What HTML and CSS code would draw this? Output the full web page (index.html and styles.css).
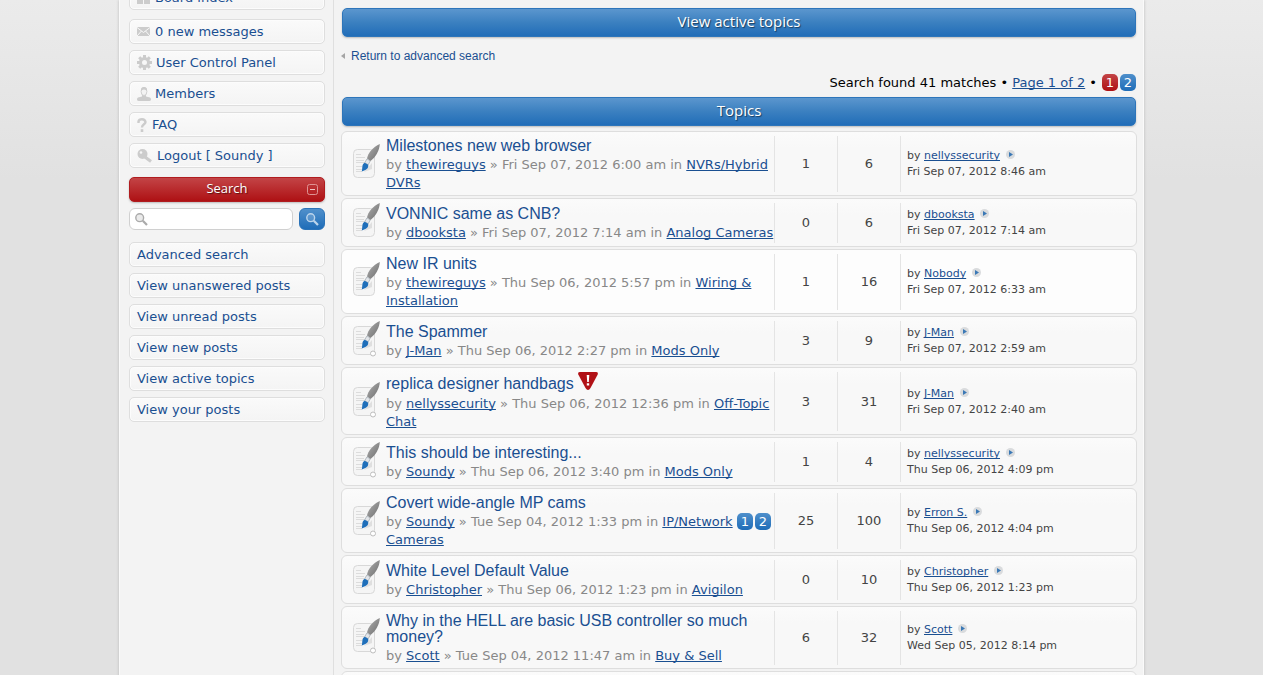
FILE: index.html
```
<!DOCTYPE html>
<html lang="en">
<head>
<meta charset="utf-8">
<title>Search results</title>
<link rel="stylesheet" href="styles.css">
</head>
<body>
<svg class="defs" aria-hidden="true">
  <defs>
    <linearGradient id="handle" x1="0" y1="0" x2="1" y2="1"><stop offset="0" stop-color="#b0b0b0"/><stop offset="1" stop-color="#6c6c6c"/></linearGradient>
    <symbol id="topic" viewBox="0 0 28 34">
      <rect x="1.500" y="5.500" width="21" height="28" rx="4" fill="#f5f5f5" stroke="#d8d8d8"/>
      <path d="M4 10.500h5M4 13.500h9M4 16.500h8M4 18.500h8M4 22.500h6M4 25.500h6M4 27.500h6" stroke="#dcdcdc" fill="none"/>
      <path d="M12 28l8-9v6z" fill="#d0d0d0" opacity=".6"/>
      <path d="M27.800 0C21 3 16 9 15 14.500L18.500 17C24 13 27.500 6 27.800 0z" fill="url(#handle)"/>
      <path d="M15 14.800L18.200 17 16.200 20.800 12.700 18.700z" fill="#e3e6ea" stroke="#9ba3ab" stroke-width=".7"/>
      <path d="M12.700 18.700C9.500 20.500 10.800 23.500 9.800 27.500 13 26.500 17 25 16.200 20.800z" fill="#1f6fba"/>
    </symbol>
    <symbol id="topic-mine" viewBox="0 0 28 36">
      <use href="#topic" width="28" height="34"/>
      <circle cx="21" cy="32.500" r="2.500" fill="#fff" stroke="#bdbdbd"/>
    </symbol>
    <symbol id="go" viewBox="0 0 9 9">
      <circle cx="4.500" cy="4.500" r="4.500" fill="#d9dbdd"/>
      <path d="M3 2l4 2.500L3 7z" fill="#3a78b5"/>
    </symbol>
    <symbol id="lens" viewBox="0 0 13 13">
      <circle cx="4.700" cy="4.700" r="3.900" fill="currentColor" fill-opacity=".25" stroke="currentColor" stroke-width="1.400"/>
      <path d="M7.800 7.800L12 12" stroke="currentColor" stroke-width="2.200" fill="none"/>
    </symbol>
  </defs>
</svg>

<div class="page">
  <aside class="sidebar">
    <ul class="menu menu-first">
      <li><a href="#"><svg width="13" height="13" viewBox="0 0 13 13"><path d="M0 0h6v6H0zM7 0h6v6H7zM0 7h6v6H0zM7 7h6v6H7z"/></svg>Board index</a></li>
    </ul>
    <ul class="menu">
      <li><a href="#"><svg width="13" height="9" viewBox="0 0 13 9"><path d="M0 0h13v9H0z"/><path d="M0 .5l6.500 5 6.500-5M0 9l4.500-5M13 9L8.500 4" fill="none" stroke="#f8f8f8"/></svg>0 new messages</a></li>
      <li><a href="#"><svg class="gear" width="15" height="15" viewBox="0 0 15 15"><circle cx="7.500" cy="7.500" r="4" fill="none" stroke="#ccc" stroke-width="3"/><path d="M6 0h3v3H6zM6 12h3v3H6zM0 6h3v3H0zM12 6h3v3h-3z"/><path d="M6 0h3v3H6zM6 12h3v3H6zM0 6h3v3H0zM12 6h3v3h-3z" transform="rotate(45 7.500 7.500)"/></svg>User Control Panel</a></li>
      <li><a href="#"><svg class="person" width="14" height="14" viewBox="0 0 14 14"><path d="M5 8h4v1.500l4 1Q14 11 14 12.500 14 14 11 14H3Q0 14 0 12.500 0 11 1 10.500l4-1z"/><ellipse cx="7" cy="4.500" rx="2.900" ry="4" fill="#f3f3f3" stroke="#d0d0d0"/><path d="M4 4Q3.500 0 7 0t3 4Q9 2.500 7 2.500T4 4z"/></svg>Members</a></li>
      <li><a href="#"><svg width="10" height="14" viewBox="0 0 10 14"><path d="M1.500 5V3.500Q2 1.200 5 1.200T8.500 4C8.500 6.500 5 6 5 9.500" fill="none" stroke="#ccc" stroke-width="2.400"/><path d="M3.700 11.200h2.600V14H3.700z"/></svg>FAQ</a></li>
      <li><a href="#"><svg class="key" width="16" height="14" viewBox="0 0 16 14"><circle cx="5.500" cy="5" r="5"/><path d="M8 8l6 4.500" fill="none" stroke="#ccc" stroke-width="3.200"/><circle cx="4" cy="3.500" r="1.300" fill="#f5f5f5"/></svg>Logout [ Soundy ]</a></li>
    </ul>
    <h2 class="side-title">Search
      <button class="collapse" type="button" aria-label="Collapse"><svg width="11" height="11" viewBox="0 0 11 11"><rect x=".5" y=".5" width="10" height="10" rx="2" fill="none" stroke="#df9393"/><path d="M3 5.500h5" stroke="#f0c4c4"/></svg></button>
    </h2>
    <form class="search">
      <label class="field"><svg width="13" height="13"><use href="#lens"/></svg><input type="text" aria-label="Search keywords"></label>
      <button class="submit" type="button" aria-label="Search"><svg width="13" height="13"><use href="#lens"/></svg></button>
    </form>
    <ul class="menu">
      <li><a href="#">Advanced search</a></li>
      <li><a href="#">View unanswered posts</a></li>
      <li><a href="#">View unread posts</a></li>
      <li><a href="#">View new posts</a></li>
      <li><a href="#">View active topics</a></li>
      <li><a href="#">View your posts</a></li>
    </ul>
  </aside>

  <main class="content">
    <h2 class="bar">View active topics</h2>
    <p class="return"><a href="#"><svg width="4" height="6" viewBox="0 0 4 6"><path d="M4 0v6L0 3z" fill="#a5a5a5"/></svg>Return to advanced search</a></p>
    <p class="results"><span>Search found 41 matches • <a href="#">Page 1 of 2</a> •</span><span class="pages"><strong>1</strong><a href="#">2</a></span></p>
    <h2 class="bar">Topics</h2>

    <table class="topics">
      <tbody>
      <tr>
        <td class="topic"><svg class="icon" width="28" height="34"><use href="#topic"/></svg><div><a class="title" href="#">Milestones new web browser</a><p>by <a href="#">thewireguys</a> » Fri Sep 07, 2012 6:00 am in <a href="#">NVRs/Hybrid DVRs</a></p></div></td>
        <td class="num">1</td><td class="num">6</td>
        <td class="last">by <a href="#">nellyssecurity</a> <svg class="go"><use href="#go"/></svg><br>Fri Sep 07, 2012 8:46 am</td>
      </tr>
      <tr>
        <td class="topic"><svg class="icon" width="28" height="34"><use href="#topic"/></svg><div><a class="title" href="#">VONNIC same as CNB?</a><p>by <a href="#">dbooksta</a> » Fri Sep 07, 2012 7:14 am in <a href="#">Analog Cameras</a></p></div></td>
        <td class="num">0</td><td class="num">6</td>
        <td class="last">by <a href="#">dbooksta</a> <svg class="go"><use href="#go"/></svg><br>Fri Sep 07, 2012 7:14 am</td>
      </tr>
      <tr class="lit">
        <td class="topic"><svg class="icon" width="28" height="34"><use href="#topic"/></svg><div><a class="title" href="#">New IR units</a><p>by <a href="#">thewireguys</a> » Thu Sep 06, 2012 5:57 pm in <a href="#">Wiring &amp; Installation</a></p></div></td>
        <td class="num">1</td><td class="num">16</td>
        <td class="last">by <a href="#">Nobody</a> <svg class="go"><use href="#go"/></svg><br>Fri Sep 07, 2012 6:33 am</td>
      </tr>
      <tr>
        <td class="topic"><svg class="icon" width="28" height="34"><use href="#topic-mine" width="28" height="36"/></svg><div><a class="title" href="#">The Spammer</a><p>by <a href="#">J-Man</a> » Thu Sep 06, 2012 2:27 pm in <a href="#">Mods Only</a></p></div></td>
        <td class="num">3</td><td class="num">9</td>
        <td class="last">by <a href="#">J-Man</a> <svg class="go"><use href="#go"/></svg><br>Fri Sep 07, 2012 2:59 am</td>
      </tr>
      <tr>
        <td class="topic"><svg class="icon" width="28" height="34"><use href="#topic-mine" width="28" height="36"/></svg><div><a class="title reported" href="#">replica designer handbags <svg width="20" height="18" viewBox="0 0 20 18"><path d="M2 0h16q2.500 0 1.700 2.500L12.500 16q-2.500 4-5 0L.3 2.500Q-.5 0 2 0z" fill="#b11116"/><path d="M8.700 3h2.600l-.5 7H9.200zM8.800 11.200h2.400v2.400H8.800z" fill="#fff"/></svg></a><p>by <a href="#">nellyssecurity</a> » Thu Sep 06, 2012 12:36 pm in <a href="#">Off-Topic Chat</a></p></div></td>
        <td class="num">3</td><td class="num">31</td>
        <td class="last">by <a href="#">J-Man</a> <svg class="go"><use href="#go"/></svg><br>Fri Sep 07, 2012 2:40 am</td>
      </tr>
      <tr>
        <td class="topic"><svg class="icon" width="28" height="34"><use href="#topic-mine" width="28" height="36"/></svg><div><a class="title" href="#">This should be interesting...</a><p>by <a href="#">Soundy</a> » Thu Sep 06, 2012 3:40 pm in <a href="#">Mods Only</a></p></div></td>
        <td class="num">1</td><td class="num">4</td>
        <td class="last">by <a href="#">nellyssecurity</a> <svg class="go"><use href="#go"/></svg><br>Thu Sep 06, 2012 4:09 pm</td>
      </tr>
      <tr>
        <td class="topic"><svg class="icon" width="28" height="34"><use href="#topic-mine" width="28" height="36"/></svg><div><a class="title" href="#">Covert wide-angle MP cams</a><p><span class="pages"><a href="#">1</a><a href="#">2</a></span>by <a href="#">Soundy</a> » Tue Sep 04, 2012 1:33 pm in <a href="#">IP/Network Cameras</a></p></div></td>
        <td class="num">25</td><td class="num">100</td>
        <td class="last">by <a href="#">Erron S.</a> <svg class="go"><use href="#go"/></svg><br>Thu Sep 06, 2012 4:04 pm</td>
      </tr>
      <tr>
        <td class="topic"><svg class="icon" width="28" height="34"><use href="#topic"/></svg><div><a class="title" href="#">White Level Default Value</a><p>by <a href="#">Christopher</a> » Thu Sep 06, 2012 1:23 pm in <a href="#">Avigilon</a></p></div></td>
        <td class="num">0</td><td class="num">10</td>
        <td class="last">by <a href="#">Christopher</a> <svg class="go"><use href="#go"/></svg><br>Thu Sep 06, 2012 1:23 pm</td>
      </tr>
      <tr>
        <td class="topic"><svg class="icon" width="28" height="34"><use href="#topic-mine" width="28" height="36"/></svg><div><a class="title" href="#">Why in the HELL are basic USB controller so much money?</a><p>by <a href="#">Scott</a> » Tue Sep 04, 2012 11:47 am in <a href="#">Buy &amp; Sell</a></p></div></td>
        <td class="num">6</td><td class="num">32</td>
        <td class="last">by <a href="#">Scott</a> <svg class="go"><use href="#go"/></svg><br>Wed Sep 05, 2012 8:14 pm</td>
      </tr>
      <tr><td class="topic"></td><td class="num"></td><td class="num"></td><td class="last"></td></tr>
      </tbody>
    </table>
  </main>
</div>
</body>
</html>
```
FILE: styles.css
```
* { box-sizing: border-box; }
html { height: 100%; overflow: hidden; }
body {
  height: 100%;
  margin: 0;
  overflow: hidden;
  background: linear-gradient(#ebebeb, #e1e1e1 180px);
  font: 13px/18px "DejaVu Sans", Verdana, sans-serif;
  color: #000;
}
h2, p, ul { margin: 0; padding: 0; }
a { color: #1a4f91; text-decoration-skip-ink: none; }
.defs { position: absolute; width: 0; height: 0; }

.page {
  display: flex;
  min-height: 100%;
  margin: 0 119px;
  background: #f3f3f3;
  border: solid #fafafa;
  border-width: 0 1px;
  box-shadow: 0 0 3px #bbb;
}

.sidebar {
  flex: 0 0 214px;
  min-width: 0;
  padding: 0 8px 0 9px;
  border-right: 1px solid #dfdfdf;
}
.menu { list-style: none; display: grid; gap: 6px; }
.menu-first { margin: -15px 0 9px; }
.menu a {
  display: flex;
  align-items: center;
  height: 25px;
  padding: 0 7px;
  border: 1px solid #dedede;
  border-radius: 5px;
  background: linear-gradient(#fafafa, #f4f4f4);
  box-shadow: inset 0 0 0 1px #fcfcfc;
  text-decoration: none;
}
.menu svg { margin-right: 5px; fill: #ccc; }
.menu .gear, .menu .key, .menu .person { margin-right: 4px; }

.side-title, .bar {
  font: 13px/20px "Open Sans", "Noto Sans", sans-serif;
  text-align: center;
  color: #fff;
  border-radius: 5px;
  text-shadow: 1px 1px 1px rgba(0, 0, 0, .5);
}
.side-title {
  position: relative;
  height: 25px;
  margin: 9px 0 6px;
  background: linear-gradient(#c34446, #ae1114);
  border: 1px solid #b01c1f;
  box-shadow: 0 1px 2px #bbb;
}
.collapse {
  position: absolute;
  right: 6px;
  top: 6px;
  display: flex;
  padding: 0;
  border: 0;
  background: none;
}
.search { display: flex; gap: 6px; margin-bottom: 12px; }
.field {
  flex: 1;
  min-width: 0;
  display: flex;
  align-items: center;
  height: 22px;
  padding: 0 5px;
  color: #aaa;
  background: #fff;
  border: 1px solid #d0d0d0;
  border-radius: 6px;
}
.field svg { flex: none; }
.field input { flex: 1; min-width: 0; border: 0; outline: 0; background: none; }
.submit {
  flex: none;
  display: flex;
  align-items: center;
  justify-content: center;
  width: 26px;
  padding: 0;
  color: #bcd5ec;
  border: 1px solid #2b73b8;
  border-radius: 6px;
  background: linear-gradient(#5090cb, #1f6db8);
}

.content { flex: 1; min-width: 0; padding: 8px 6px 0 7px; }
.bar {
  height: 29px;
  margin: 0 1px;
  font-size: 15px;
  line-height: 25px;
  background: linear-gradient(#5b96ce, #3b80c0 50%, #216db8);
  border: 1px solid #2d75ba;
  box-shadow: 0 1px 2px #bbb;
}
.return {
  margin-top: 10px;
  font: 12px/18px "Liberation Sans", Arial, sans-serif;
}
.return a { display: flex; align-items: center; gap: 6px; text-decoration: none; }
.results {
  display: flex;
  justify-content: flex-end;
  gap: 5px;
  margin: 9px 1px 5px;
}
.pages { display: flex; gap: 2px; }
.pages a, .pages strong {
  width: 16px;
  height: 17px;
  line-height: 17px;
  font-weight: normal;
  text-align: center;
  text-decoration: none;
  color: #fff;
  border-radius: 5px;
  background: linear-gradient(#4e8fcb, #1f6db8);
}
.pages strong { background: linear-gradient(#c34446, #ae1114); }

.topics, .topics tbody { display: grid; gap: 2px; }
.topics { margin-top: 5px; }
.topics tr {
  display: grid;
  grid-template-columns: 1fr 63px 63px 236px;
  min-height: 49px;
  padding: 4px 0 3px;
  border: 1px solid #dedede;
  border-radius: 6px;
  background: linear-gradient(#fbfbfb, #f8f8f8 16px);
}
.topics .lit { background: #fdfdfd; }
.topics td { display: flex; align-items: center; padding: 0; }
.topics .topic { gap: 6px; padding-left: 10px; }
.topic > div { flex: 1; padding-top: 2px; }
.icon { flex: none; margin-bottom: 6px; overflow: visible; }
.title {
  display: block;
  margin-bottom: 2px;
  font: 16px/16px "Liberation Sans", Arial, sans-serif;
  text-decoration: none;
}
.reported { line-height: 19px; }
.reported svg { margin-top: -4px; vertical-align: -1px; }
.topic p { color: #888; }
.topic .pages { float: right; margin-right: 3px; }
.topics .num {
  justify-content: center;
  color: #444;
  border-left: 1px solid #e4e4e4;
}
.topics .last {
  display: block;
  align-self: stretch;
  align-content: center;
  padding-left: 6px;
  border-left: 1px solid #e4e4e4;
  color: #444;
  font-size: 11px;
  line-height: 16px;
}
.go { width: 9px; height: 9px; margin-left: 2px; }
```
